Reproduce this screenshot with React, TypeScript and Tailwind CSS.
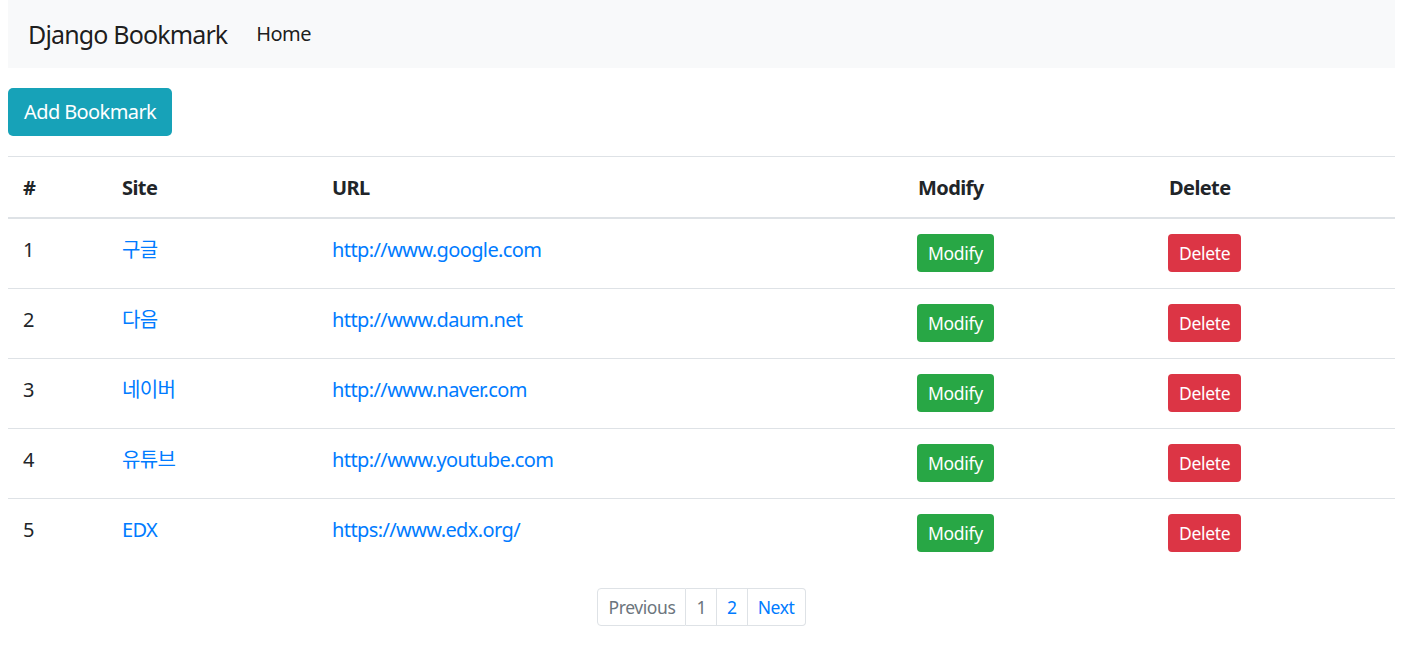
import React from "react";

const rows = [
  { n: 1, site: "구글", url: "http://www.google.com" },
  { n: 2, site: "다음", url: "http://www.daum.net" },
  { n: 3, site: "네이버", url: "http://www.naver.com" },
  { n: 4, site: "유튜브", url: "http://www.youtube.com" },
  { n: 5, site: "EDX", url: "https://www.edx.org/" },
];

const font = {
  fontFamily: '"Noto Sans", "Noto Sans CJK KR", sans-serif',
};

export default function App() {
  return (
    <div className="bg-white min-h-[670px] pl-[8px] pr-[20px] text-[#212529] text-[20px] leading-[30px]" style={font}>
      <nav className="h-[68px] bg-[#f8f9fa] flex items-center px-[20px]">
        <span className="text-[25px] leading-[37px] text-[rgba(0,0,0,0.9)] mr-[29px] tracking-[-0.85px]">Django Bookmark</span>
        <span className="text-[20px] text-[rgba(0,0,0,0.9)] tracking-[-0.6px]">Home</span>
      </nav>
      <div className="mt-[20px]">
        <button className="h-[48px] px-[16px] bg-[#17a2b8] text-white rounded-[5px] text-[20px] tracking-[-0.6px]">Add Bookmark</button>
      </div>
      <table className="w-full mt-[20px] border-collapse tracking-[-0.6px]">
        <colgroup>
          <col className="w-[99px]" />
          <col className="w-[210px]" />
          <col className="w-[586px]" />
          <col className="w-[251px]" />
          <col />
        </colgroup>
        <thead>
          <tr className="border-t border-[#dee2e6] border-b-2">
            {["#", "Site", "URL", "Modify", "Delete"].map((h) => (
              <th key={h} className="text-left font-bold px-[15px] pt-[16px] pb-[14px] align-bottom">{h}</th>
            ))}
          </tr>
        </thead>
        <tbody>
          {rows.map((r, i) => (
            <tr key={r.n} className={i > 0 ? "border-t border-[#dee2e6]" : ""}>
              <td className="px-[15px] pt-[16px] pb-[15px] h-[70px] align-top">{r.n}</td>
              <td className="px-[15px] pt-[16px] pb-[15px] align-top text-[#007bff]">{r.site}</td>
              <td className="px-[15px] pt-[16px] pb-[15px] align-top text-[#007bff]">{r.url}</td>
              <td className="px-[14px] pt-[15px] pb-[15px] align-top">
                <button className="h-[38px] px-[11px] bg-[#28a745] text-white text-[17.5px] rounded-[4px] tracking-[-0.3px]">Modify</button>
              </td>
              <td className="px-[14px] pt-[15px] pb-[15px] align-top">
                <button className="h-[38px] px-[11px] bg-[#dc3545] text-white text-[17.5px] rounded-[4px] tracking-[-0.3px]">Delete</button>
              </td>
            </tr>
          ))}
        </tbody>
      </table>
      <div className="flex justify-center mt-[20px]">
        <div className="flex h-[38px] text-[17.5px] tracking-[-0.4px]">
          <span className="flex items-center px-[10px] border border-[#dee2e6] rounded-l-[4px] text-[#6c757d]">Previous</span>
          <span className="flex items-center px-[10px] border border-l-0 border-[#dee2e6] text-[#6c757d]">1</span>
          <span className="flex items-center px-[10px] border border-l-0 border-[#dee2e6] text-[#007bff]">2</span>
          <span className="flex items-center px-[10px] border border-l-0 border-[#dee2e6] rounded-r-[4px] text-[#007bff]">Next</span>
        </div>
      </div>
    </div>
  );
}
